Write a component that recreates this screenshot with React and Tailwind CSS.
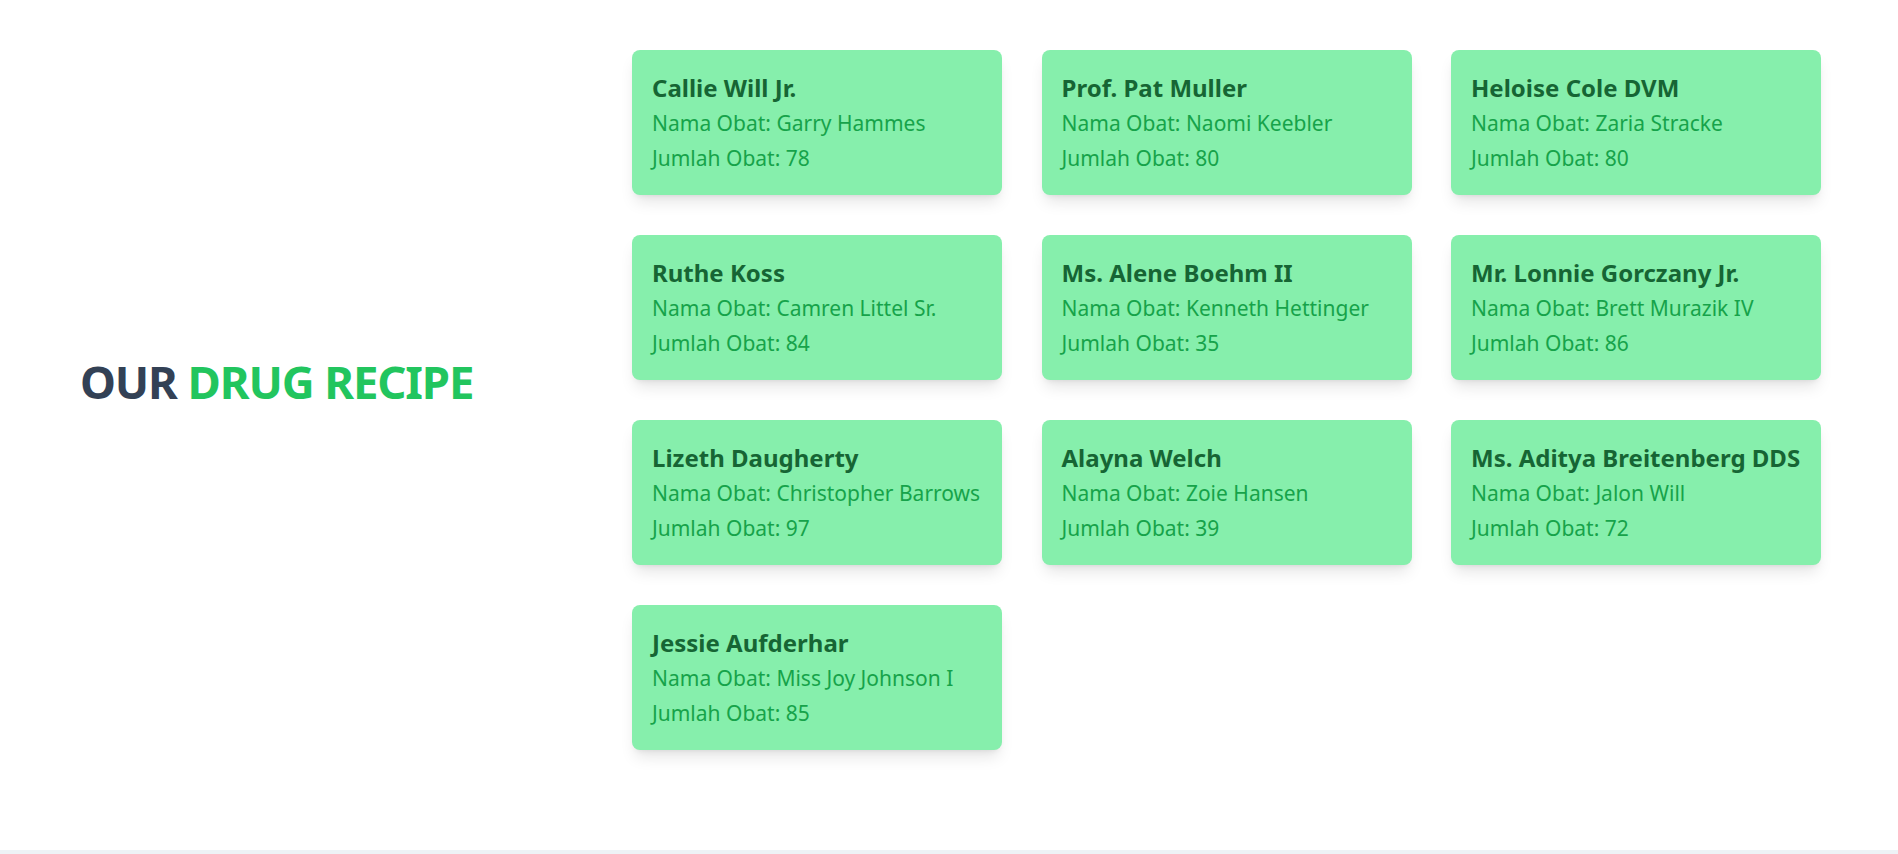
const cards = [
  { name: "Callie Will Jr.", obat: "Garry Hammes", jumlah: 78 },
  { name: "Prof. Pat Muller", obat: "Naomi Keebler", jumlah: 80 },
  { name: "Heloise Cole DVM", obat: "Zaria Stracke", jumlah: 80 },
  { name: "Ruthe Koss", obat: "Camren Littel Sr.", jumlah: 84 },
  { name: "Ms. Alene Boehm II", obat: "Kenneth Hettinger", jumlah: 35 },
  { name: "Mr. Lonnie Gorczany Jr.", obat: "Brett Murazik IV", jumlah: 86 },
  { name: "Lizeth Daugherty", obat: "Christopher Barrows", jumlah: 97 },
  { name: "Alayna Welch", obat: "Zoie Hansen", jumlah: 39 },
  { name: "Ms. Aditya Breitenberg DDS", obat: "Jalon Will", jumlah: 72 },
  { name: "Jessie Aufderhar", obat: "Miss Joy Johnson I", jumlah: 85 },
];

export default function App() {
  return (
    <div className="bg-white" style={{ fontFamily: '"Noto Sans", "Open Sans", sans-serif' }}>
      <section className="flex h-[850px] pt-[50px]">
        <div className="w-[632px] shrink-0 flex items-center pl-[80px] pb-[136px]">
          <h1 className="text-[45.5px] font-bold leading-none tracking-tight">
            <span className="text-[#334155]">OUR </span>
            <span className="text-[#22c55e]">DRUG RECIPE</span>
          </h1>
        </div>
        <div className="grid grid-cols-[370px_370px_370px] gap-x-[39.5px] gap-y-[40px] content-start">
          {cards.map((c) => (
            <div
              key={c.name}
              className="bg-[#86efac] rounded-lg shadow-lg h-[145px] px-5 pt-6 whitespace-nowrap"
            >
              <div className="text-[24px] leading-7 font-bold text-[#166534] mb-[7px]">{c.name}</div>
              <div className="text-[21px] leading-7 text-[#16a34a] mb-[7px]">Nama Obat: {c.obat}</div>
              <div className="text-[21px] leading-7 text-[#16a34a]">Jumlah Obat: {c.jumlah}</div>
            </div>
          ))}
        </div>
      </section>
      <div className="h-[4px] bg-[#eef2f6]" />
    </div>
  );
}
